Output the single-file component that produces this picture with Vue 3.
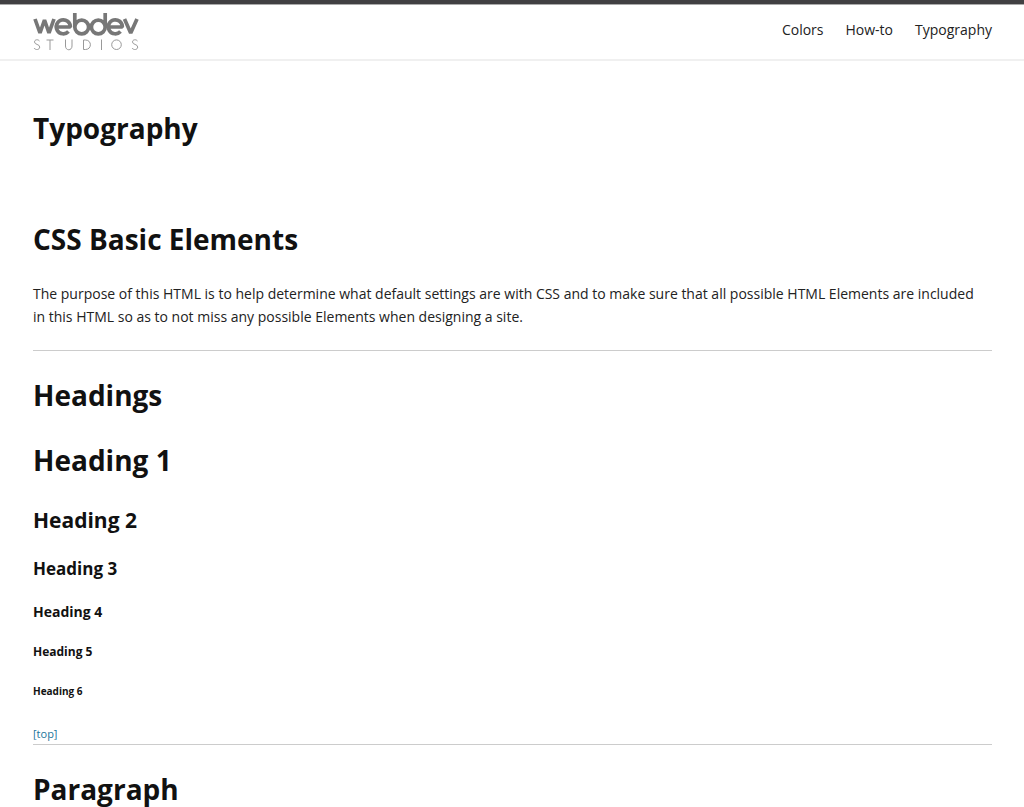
<script setup>
const links = ['Colors', 'How-to', 'Typography']
</script>

<template>
  <div class="page" id="top">
    <header class="site-header">
      <a class="brand" href="#" aria-label="WebDevStudios home">
        <svg class="logo" viewBox="0 0 106 38" width="106" height="38" aria-hidden="true">
          <g fill="none" stroke="#777" stroke-width="3.7" stroke-linejoin="bevel">
            <path d="M2 6 L7 20 L11.5 7 L16 20 L21 6" />
            <path d="M23 14 H37.300 A7 7 0 1 0 35.500 18.500" />
            <path d="M41.800 0 V14 M41.800 14 A6.900 6.900 0 1 0 55.600 14 A6.900 6.900 0 1 0 41.800 14" />
            <path d="M72.200 0 V14 M72.200 14 A6.900 6.900 0 1 0 58.400 14 A6.900 6.900 0 1 0 72.200 14" />
            <path d="M75 14 H89.300 A7 7 0 1 0 87.500 18.500" />
            <path d="M91.500 6 L97.700 20 L104 6" />
          </g>
          <g fill="none" stroke="#999" stroke-width="1">
            <path d="M6.500 28 C5 26 1.500 26.500 1.500 29 C1.500 31.800 6.700 31 6.700 34 C6.700 37 2.500 37.300 1 35" />
            <path d="M13.500 27 H20.500 M17 27 V37" />
            <path d="M32.500 26.500 V33 C32.500 38 39 38 39 33 V26.500" />
            <path d="M50.500 27 V36.500 H52.500 C59 36.500 59 27 52.500 27 Z" />
            <path d="M68.500 26.500 V37" />
            <circle cx="83.500" cy="31.700" r="4.800" />
            <path d="M104.500 28 C103 26 99.500 26.500 99.500 29 C99.500 31.800 104.700 31 104.700 34 C104.700 37 100.500 37.300 99 35" />
          </g>
        </svg>
      </a>
      <nav class="nav" aria-label="Primary">
        <a v-for="link in links" :key="link" href="#">{{ link }}</a>
      </nav>
    </header>
    <main class="content">
      <h1 class="title">Typography</h1>
      <h1>CSS Basic Elements</h1>
      <p>The purpose of this HTML is to help determine what default settings are with CSS and to make sure that all possible HTML Elements are included in this HTML so as to not miss any possible Elements when designing a site.</p>
      <hr />
      <h1>Headings</h1>
      <h1>Heading 1</h1>
      <h2>Heading 2</h2>
      <h3>Heading 3</h3>
      <h4>Heading 4</h4>
      <h5>Heading 5</h5>
      <h6>Heading 6</h6>
      <small><a href="#top">[top]</a></small>
      <hr />
      <h1>Paragraph</h1>
    </main>
  </div>
</template>

<style>
body { background: #fff; }
html { overflow-x: hidden; scrollbar-width: none; }
</style>

<style scoped>
.page {
  border-top: 4px solid #414042;
  color: #111;
  font: 14px/23px "Open Sans", sans-serif;
}
.site-header {
  display: flex;
  justify-content: space-between;
  align-items: flex-start;
  padding: 0 32px 8px 33px;
  border-top: 1px solid #aaa;
  border-bottom: 2px solid #f0f0f0;
}
.brand { padding-top: 8px; }
.logo { display: block; }
.nav { display: flex; gap: 22px; padding-top: 13px; }
.nav a { color: #222; text-decoration: none; }
.content { padding: 45px 32px 0 33px; }
h1, h2, h3, h4, h5, h6 { margin: 0 0 20px; font-weight: 700; }
h1 { font-size: 28px; line-height: 45px; }
h2 { margin-bottom: 18px; font-size: 21px; line-height: 35px; }
h3 { font-size: 17px; line-height: 25px; }
h4 { font-size: 14px; line-height: 22px; }
h5 { margin-bottom: 22px; font-size: 12px; line-height: 18px; }
h6 { margin-bottom: 24px; font-size: 10px; line-height: 16px; }
.title { margin-bottom: 66px; }
p { margin: 0 0 22px; padding-right: 8px; color: #222; }
hr { height: 1px; margin: 0 0 22px; border: 0; background: #ccc; }
small { display: block; font-size: 11px; line-height: 21px; }
small a { color: #21759b; text-decoration: none; }
</style>
